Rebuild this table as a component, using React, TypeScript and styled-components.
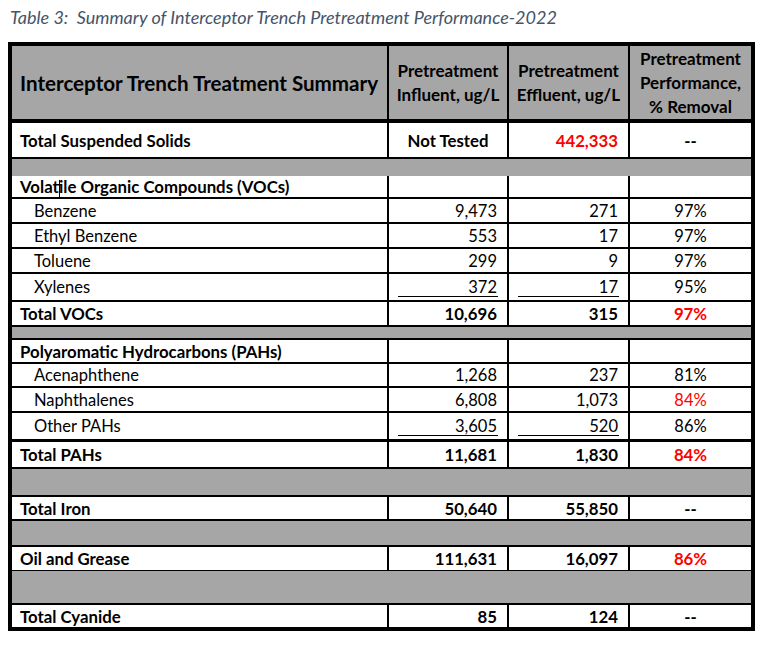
import React from "react";
import styled, { createGlobalStyle } from "styled-components";

const Global = createGlobalStyle`
  html, body { margin: 0; padding: 0; background: #ffffff; }
  body { font-family: Lato, "Open Sans", "Liberation Sans", sans-serif; color: #000; }
`;

const Page = styled.div`
  padding: 6px 8px 0 8px;
  width: 768px;
  box-sizing: border-box;
`;

const Title = styled.div`
  font-style: italic;
  font-size: 18px;
  line-height: 22px;
  color: #44546a;
  white-space: pre;
  padding-left: 2px;
  height: 36px;
`;

const Table = styled.div`
  width: 747px;
  box-sizing: border-box;
  border: 4px solid #000;
  display: flex;
  flex-direction: column;
  background: #000;
`;

const Row = styled.div<{ $h: number; $top?: number }>`
  display: grid;
  grid-template-columns: 375px 118px 119px 121px;
  column-gap: 2px;
  height: ${(p) => p.$h}px;
  margin-top: ${(p) => p.$top ?? 0}px;
  background: #000;
`;

const Band = styled.div<{ $h: number; $top?: number }>`
  height: ${(p) => p.$h}px;
  margin-top: ${(p) => p.$top ?? 0}px;
  background: #a6a6a6;
`;

const HeadCell = styled.div<{ $big?: boolean; $align?: "left" | "center" }>`
  background: #a6a6a6;
  display: flex;
  align-items: center;
  justify-content: ${(p) => (p.$align === "left" ? "flex-start" : "center")};
  text-align: ${(p) => (p.$align === "left" ? "left" : "center")};
  padding-left: ${(p) => (p.$align === "left" ? "8px" : "0")};
  font-weight: 700;
  font-size: ${(p) => (p.$big ? "20.6px" : "17px")};
  line-height: 24px;
  white-space: pre-line;
`;

type Align = "left" | "right" | "center";

const Cell = styled.div<{
  $align?: Align;
  $bold?: boolean;
  $red?: boolean;
  $indent?: boolean;
  $under?: boolean;
}>`
  position: relative;
  background: #fff;
  display: flex;
  align-items: center;
  justify-content: ${(p) =>
    p.$align === "right" ? "flex-end" : p.$align === "center" ? "center" : "flex-start"};
  padding: 0 ${(p) => (p.$align === "right" ? "10px" : "0")} 0
    ${(p) => (p.$align === "left" || !p.$align ? (p.$indent ? "22px" : "8px") : "0")};
  font-size: ${(p) => (p.$bold ? "16.8px" : "16.5px")};
  font-weight: ${(p) => (p.$bold ? 700 : 400)};
  color: ${(p) => (p.$red ? "#ff0000" : "#000")};
  white-space: nowrap;
  &::after {
    content: "";
    display: ${(p) => (p.$under ? "block" : "none")};
    position: absolute;
    left: 9px;
    right: 9px;
    bottom: 3px;
    height: 1.5px;
    background: #000;
  }
`;

const Caret = styled.span`
  position: absolute;
  left: 47px;
  top: 4px;
  width: 1px;
  height: 18px;
  background: #000;
`;

type DataRow = {
  h: number;
  top: number;
  label: string;
  inf?: string;
  eff?: string;
  pct?: string;
  bold?: boolean;
  indent?: boolean;
  under?: boolean;
  redEff?: boolean;
  redPct?: boolean;
  caret?: boolean;
  infCenter?: boolean;
};

type Item = { band: true; h: number; top: number } | ({ band?: false } & DataRow);

const items: Item[] = [
  { h: 34, top: 4, label: "Total Suspended Solids", inf: "Not Tested", eff: "442,333", pct: "--", bold: true, redEff: true, infCenter: true },
  { band: true, h: 17, top: 2 },
  { h: 21, top: 0, label: "Volatile Organic Compounds (VOCs)", bold: true, caret: true },
  { h: 23, top: 2, label: "Benzene", inf: "9,473", eff: "271", pct: "97%", indent: true },
  { h: 23, top: 2, label: "Ethyl Benzene", inf: "553", eff: "17", pct: "97%", indent: true },
  { h: 23, top: 2, label: "Toluene", inf: "299", eff: "9", pct: "97%", indent: true },
  { h: 26, top: 2, label: "Xylenes", inf: "372", eff: "17", pct: "95%", indent: true, under: true },
  { h: 23, top: 2, label: "Total VOCs", inf: "10,696", eff: "315", pct: "97%", bold: true, redPct: true },
  { band: true, h: 11, top: 2 },
  { h: 22, top: 2, label: "Polyaromatic Hydrocarbons (PAHs)", bold: true },
  { h: 22, top: 2, label: "Acenaphthene", inf: "1,268", eff: "237", pct: "81%", indent: true },
  { h: 23, top: 2, label: "Naphthalenes", inf: "6,808", eff: "1,073", pct: "84%", indent: true, redPct: true },
  { h: 26, top: 2, label: "Other PAHs", inf: "3,605", eff: "520", pct: "86%", indent: true, under: true },
  { h: 25, top: 3, label: "Total PAHs", inf: "11,681", eff: "1,830", pct: "84%", bold: true, redPct: true },
  { band: true, h: 26, top: 2 },
  { h: 22, top: 2, label: "Total Iron", inf: "50,640", eff: "55,850", pct: "--", bold: true },
  { band: true, h: 24, top: 2 },
  { h: 23, top: 2, label: "Oil and Grease", inf: "111,631", eff: "16,097", pct: "86%", bold: true, redPct: true },
  { band: true, h: 32, top: 1 },
  { h: 22, top: 2, label: "Total Cyanide", inf: "85", eff: "124", pct: "--", bold: true },
];

export default function App() {
  return (
    <Page>
      <Global />
      <Title>{"Table 3:  Summary of Interceptor Trench Pretreatment Performance-2022"}</Title>
      <Table>
        <Row $h={73}>
          <HeadCell $big $align="left">Interceptor Trench Treatment Summary</HeadCell>
          <HeadCell>{"Pretreatment\nInfluent, ug/L"}</HeadCell>
          <HeadCell>{"Pretreatment\nEffluent, ug/L"}</HeadCell>
          <HeadCell>{"Pretreatment\nPerformance,\n% Removal"}</HeadCell>
        </Row>
        {items.map((it, i) =>
          it.band ? (
            <Band key={i} $h={it.h} $top={it.top} />
          ) : (
            <Row key={i} $h={it.h} $top={it.top}>
              <Cell $align="left" $bold={it.bold} $indent={it.indent}>
                {it.label}
                {it.caret && <Caret />}
              </Cell>
              <Cell $align={it.infCenter ? "center" : "right"} $bold={it.bold} $under={it.under}>
                {it.inf}
              </Cell>
              <Cell $align="right" $bold={it.bold} $red={it.redEff} $under={it.under}>
                {it.eff}
              </Cell>
              <Cell $align="center" $bold={it.bold} $red={it.redPct}>
                {it.pct}
              </Cell>
            </Row>
          )
        )}
      </Table>
    </Page>
  );
}
